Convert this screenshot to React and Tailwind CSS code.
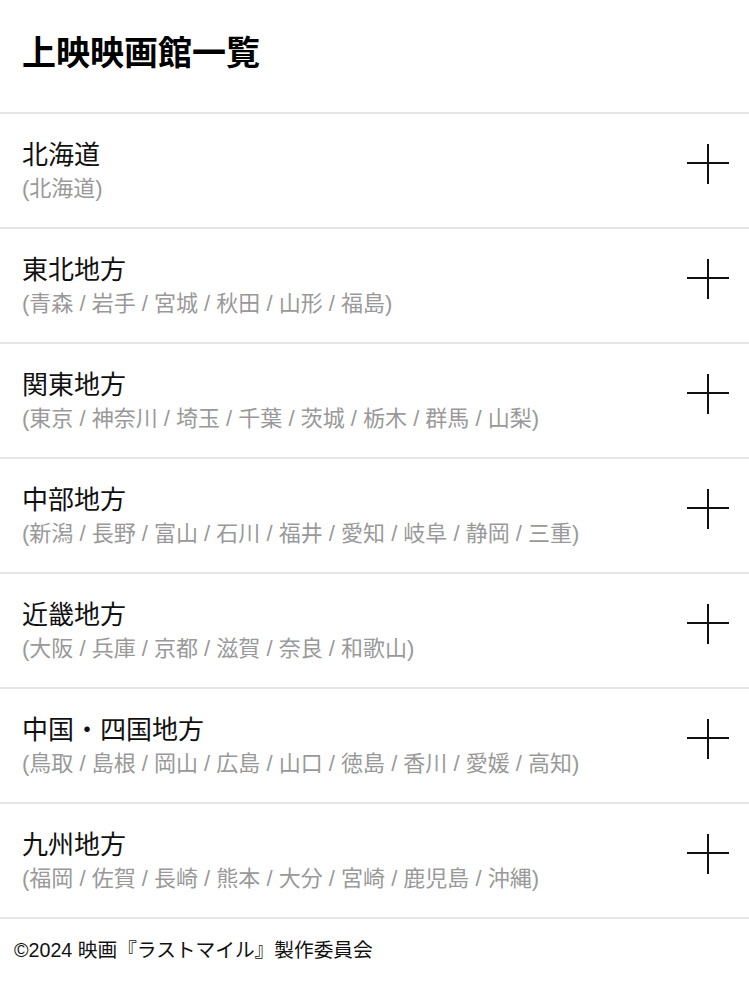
const regions = [
    { name: "北海道", prefs: ["北海道"] },
    { name: "東北地方", prefs: ["青森", "岩手", "宮城", "秋田", "山形", "福島"] },
    { name: "関東地方", prefs: ["東京", "神奈川", "埼玉", "千葉", "茨城", "栃木", "群馬", "山梨"] },
    { name: "中部地方", prefs: ["新潟", "長野", "富山", "石川", "福井", "愛知", "岐阜", "静岡", "三重"] },
    { name: "近畿地方", prefs: ["大阪", "兵庫", "京都", "滋賀", "奈良", "和歌山"] },
    { name: "中国・四国地方", prefs: ["鳥取", "島根", "岡山", "広島", "山口", "徳島", "香川", "愛媛", "高知"] },
    { name: "九州地方", prefs: ["福岡", "佐賀", "長崎", "熊本", "大分", "宮崎", "鹿児島", "沖縄"] },
];

function PlusIcon() {
    return (
        <svg width="42" height="40" viewBox="0 0 42 40" className="shrink-0">
            <line x1="0" y1="19" x2="42" y2="19" stroke="#111" strokeWidth="2" />
            <line x1="21" y1="0" x2="21" y2="40" stroke="#111" strokeWidth="2" />
        </svg>
    );
}

export default function App() {
    return (
        <div
            className="min-h-screen w-full bg-white text-[#111]"
            style={{ fontFamily: '"Liberation Sans", "Noto Sans CJK JP", sans-serif' }}
        >
            {/* header */}
            <header className="h-[114px] border-b-2 border-[#e6e6e6] px-[22px] pt-[36px]">
                <h1 className="text-[34px] font-bold leading-[34px] text-black">上映映画館一覧</h1>
            </header>

            {/* region list */}
            <ul>
                {regions.map((r) => (
                    <li
                        key={r.name}
                        className="flex h-[115px] items-start justify-between border-b-2 border-[#e6e6e6] pl-[22px] pr-[20px]"
                    >
                        <div className="pt-[24px]">
                            <div className="text-[26px] leading-[34px]">{r.name}</div>
                            <div className="text-[22px] leading-[34px] text-[#999]">
                                ({r.prefs.join(" / ")})
                            </div>
                        </div>
                        <div className="pt-[30px]">
                            <PlusIcon />
                        </div>
                    </li>
                ))}
            </ul>

            {/* footer */}
            <footer className="px-[14px] pt-[16px] pb-4">
                <p className="text-[19.7px] leading-[30px]">©2024 映画『ラストマイル』製作委員会</p>
            </footer>
        </div>
    );
}
